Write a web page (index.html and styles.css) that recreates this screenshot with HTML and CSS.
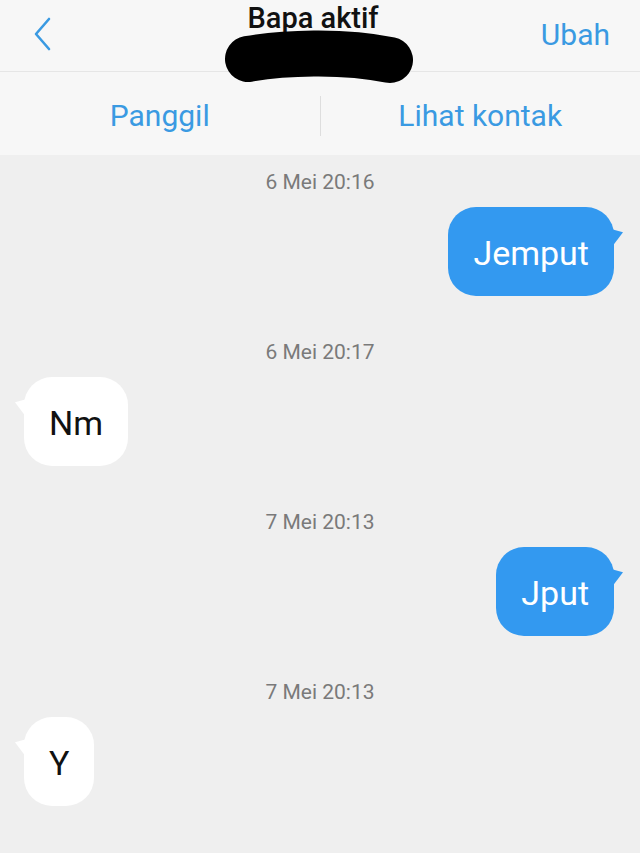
FILE: index.html
```html
<!DOCTYPE html>
<html lang="id">
<head>
  <meta charset="utf-8">
  <title>Bapa aktif</title>
  <link rel="stylesheet" href="styles.css">
</head>
<body>

  <!-- Top bar -->
  <div class="top-bar">
    <div class="back">
      <svg width="20" height="34" viewBox="0 0 20 34"><path d="M16 2 L3 17 L16 32" fill="none" stroke="#3a9ae2" stroke-width="2.6" stroke-linecap="round" stroke-linejoin="round"/></svg>
    </div>
    <div class="title">Bapa aktif</div>
    <div class="edit">Ubah</div>
    <!-- redaction scribble -->
    <svg class="scribble" width="200" height="64" viewBox="0 0 200 64"><path d="M26 31 C60 25 120 22 168 32" fill="none" stroke="#000" stroke-width="46" stroke-linecap="round"/></svg>
  </div>

  <!-- Actions -->
  <div class="actions">
    <div class="action">Panggil</div>
    <div class="divider"></div>
    <div class="action">Lihat kontak</div>
  </div>

  <!-- Messages -->
  <div class="chat">
    <div class="time">6 Mei 20:16</div>
    <div class="row out"><div class="bubble">Jemput</div></div>

    <div class="time">6 Mei 20:17</div>
    <div class="row in"><div class="bubble">Nm</div></div>

    <div class="time">7 Mei 20:13</div>
    <div class="row out"><div class="bubble">Jput</div></div>

    <div class="time">7 Mei 20:13</div>
    <div class="row in"><div class="bubble">Y</div></div>
  </div>

</body>
</html>
```

FILE: styles.css
```css
body {
  margin: 0;
  font-family: Roboto, "Noto Sans", Arial, sans-serif;
  background: #efefef;
  height: 853px;
  overflow: hidden;
}

.top-bar {
  position: relative;
  height: 72px;
  background: #f7f7f7;
  border-bottom: 1px solid #e6e6e6;
  box-sizing: border-box;
  display: flex;
  align-items: flex-start;
}

.back {
  width: 96px;
  padding: 17px 0 0 33px;
  box-sizing: border-box;
}

.title {
  flex: 1;
  text-align: center;
  font-size: 29px;
  font-weight: 500;
  line-height: 34px;
  color: #111;
  margin-top: 1px;
  padding-left: 10px;
}

.edit {
  width: 120px;
  text-align: right;
  padding: 17px 30px 0 0;
  box-sizing: border-box;
  font-size: 30px;
  color: #3a9ae2;
}

.scribble {
  position: absolute;
  left: 222px;
  top: 28px;
}

.actions {
  height: 83px;
  background: #f7f7f7;
  display: flex;
  align-items: center;
}

.action {
  flex: 1;
  text-align: center;
  font-size: 30px;
  color: #3a9ae2;
  padding-top: 4px;
}

.divider {
  width: 1px;
  height: 40px;
  background: #dedede;
  margin-top: 4px;
}

.chat {
  padding-top: 15px;
}

.time {
  text-align: center;
  font-size: 21px;
  line-height: 24px;
  color: #7a7a7a;
  margin-bottom: 13px;
}

.row {
  display: flex;
  margin-bottom: 44px;
}

.row.out {
  justify-content: flex-end;
  padding-right: 26px;
}

.row.in {
  padding-left: 24px;
}

.bubble {
  position: relative;
  height: 89px;
  line-height: 92px;
  padding: 0 25px;
  border-radius: 28px;
  font-size: 34px;
}

.out .bubble {
  background: #3399f0;
  color: #fff;
}

.in .bubble {
  background: #fff;
  color: #111;
}

.bubble::after {
  content: "";
  position: absolute;
  top: 22px;
  width: 12px;
  height: 16px;
}

.out .bubble::after {
  right: -9px;
  background: #3399f0;
  clip-path: polygon(0 0, 100% 20%, 20% 100%, 0 100%);
}

.in .bubble::after {
  left: -9px;
  background: #fff;
  clip-path: polygon(100% 0, 0 20%, 80% 100%, 100% 100%);
}
```
